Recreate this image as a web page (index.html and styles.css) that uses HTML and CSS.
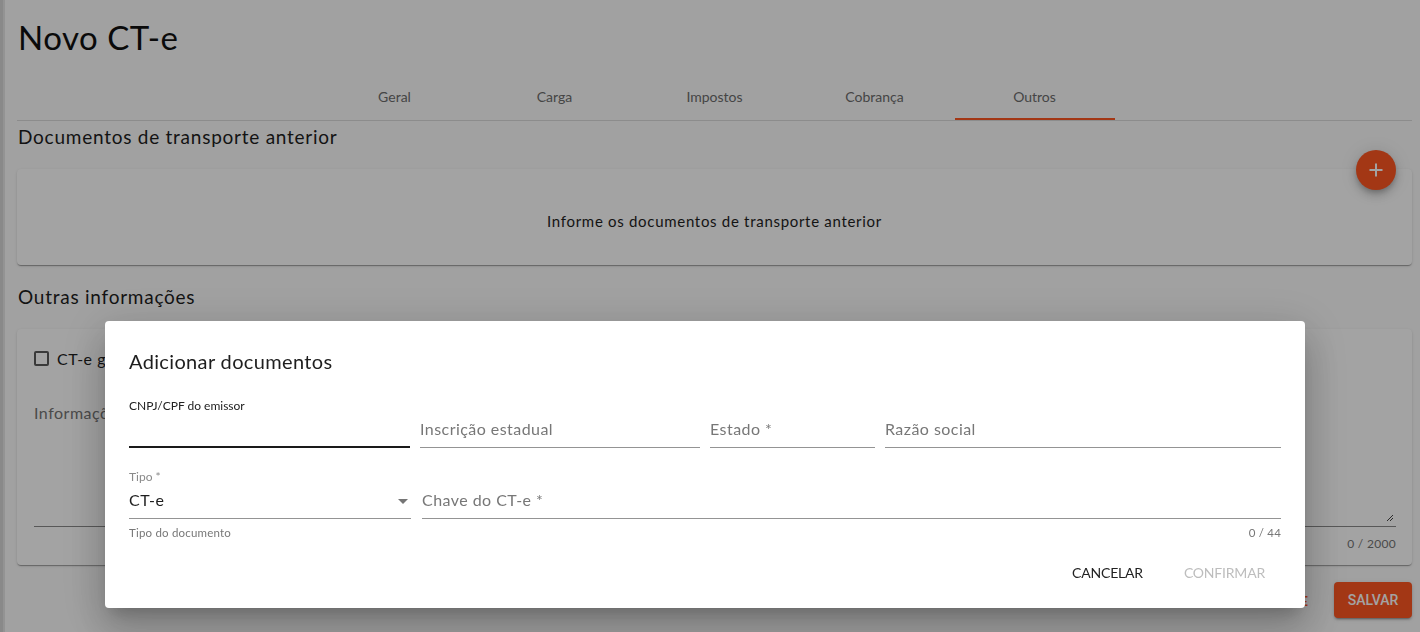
FILE: index.html
```html
<!DOCTYPE html>
<html lang="pt-BR">
<head>
<meta charset="utf-8">
<title>Novo CT-e</title>
<link rel="stylesheet" href="styles.css">
</head>
<body>
<div class="app">
  <div class="sidebar-edge"></div>
  <main class="main">
    <h1 class="page-title">Novo CT-e</h1>
    <nav class="tabs">
      <div class="tab">Geral</div>
      <div class="tab">Carga</div>
      <div class="tab">Impostos</div>
      <div class="tab">Cobrança</div>
      <div class="tab active">Outros</div>
    </nav>

    <h2 class="section-title">Documentos de transporte anterior</h2>
    <section class="card card-docs">
      <p class="empty-msg">Informe os documentos de transporte anterior</p>
      <button class="fab" aria-label="Adicionar">
        <svg width="16" height="16" viewBox="0 0 16 16"><path d="M8 1.5v13M1.5 8h13" stroke="#fff" stroke-width="2"/></svg>
      </button>
    </section>

    <h2 class="section-title">Outras informações</h2>
    <section class="card card-other">
      <label class="check-row">
        <span class="checkbox"></span>
        <span class="check-label">CT-e globalizado</span>
      </label>
      <div class="textarea-field">
        <div class="textarea-box">
          <span class="textarea-placeholder">Informações adicionais</span>
          <svg class="resize" width="8" height="8" viewBox="0 0 8 8"><path d="M1 7L7 1M4 7L7 4" stroke="#444" stroke-width="1"/></svg>
        </div>
        <div class="counter">0 / 2000</div>
      </div>
    </section>

    <div class="page-actions">
      <button class="btn-text-orange">VISUALIZAR DACTE</button>
      <button class="btn-primary">SALVAR</button>
    </div>
  </main>
</div>

<div class="backdrop"></div>

<div class="modal">
  <div class="dialog" role="dialog">
    <h3 class="dialog-title">Adicionar documentos</h3>
    <div class="row row-1">
      <div class="field f-cnpj focused">
        <span class="float-label">CNPJ/CPF do emissor</span>
        <div class="input"></div>
      </div>
      <div class="field f-ie">
        <div class="input"><span class="placeholder">Inscrição estadual</span></div>
      </div>
      <div class="field f-uf">
        <div class="input"><span class="placeholder">Estado *</span></div>
      </div>
      <div class="field f-razao">
        <div class="input"><span class="placeholder">Razão social</span></div>
      </div>
    </div>
    <div class="row row-2">
      <div class="field f-tipo">
        <span class="float-label muted">Tipo *</span>
        <div class="input select"><span class="value">CT-e</span>
          <svg class="arrow" width="10" height="5" viewBox="0 0 10 5"><path d="M0 0h10L5 5z" fill="#757575"/></svg>
        </div>
        <span class="helper">Tipo do documento</span>
      </div>
      <div class="field f-chave">
        <div class="input"><span class="placeholder">Chave do CT-e *</span></div>
        <span class="helper right">0 / 44</span>
      </div>
    </div>
    <div class="dialog-actions">
      <button class="btn-text">CANCELAR</button>
      <button class="btn-text disabled">CONFIRMAR</button>
    </div>
  </div>
</div>
</body>
</html>
```

FILE: styles.css
```css
* { box-sizing: border-box; }
html, body { margin: 0; padding: 0; }
body {
  font-family: Lato, "Noto Sans", sans-serif;
  color: #1e1e1e;
  background: #fcfcfc;
  width: 1420px;
  height: 632px;
  overflow: hidden;
}
button { font-family: inherit; border: 0; background: none; cursor: pointer; padding: 0; }

.app { display: flex; min-height: 632px; }
.sidebar-edge {
  width: 5px;
  background: linear-gradient(to right, #d6d6d6 0, #d6d6d6 3px, #e6e6e6 3px);
  flex: none;
}
.main { flex: 1; padding: 0 8px 0 12px; }

.page-title {
  margin: 17px 0 0 1px;
  font-size: 33px;
  font-weight: 400;
  line-height: 40px;
  color: #111;
  letter-spacing: 0.5px;
}

.tabs {
  margin-top: 15px;
  height: 49px;
  display: flex;
  justify-content: center;
  border-bottom: 1px solid #dcdcdc;
}
.tab {
  width: 160px;
  height: 48px;
  display: flex;
  align-items: center;
  justify-content: center;
  font-size: 14px;
  color: #6d6d6d;
}
.tab.active { border-bottom: 2px solid #ff5722; height: 48px; padding-top: 2px; }

.section-title {
  margin: 4px 0 0 1px;
  font-size: 19px;
  font-weight: 400;
  line-height: 24px;
  color: #1e1e1e;
  letter-spacing: 0.75px;
}

.card {
  background: #fff;
  border-radius: 4px;
  box-shadow: 0 2px 1px -1px rgba(0,0,0,.2), 0 1px 1px 0 rgba(0,0,0,.14), 0 1px 3px 0 rgba(0,0,0,.12);
  margin-top: 20px;
  position: relative;
}
.card-docs {
  height: 96px;
  display: flex;
  align-items: center;
  justify-content: center;
  margin-bottom: 20px;
}
.empty-msg { margin: 8px 0 0; font-size: 15px; color: #1e1e1e; letter-spacing: 0.7px; }

.fab {
  position: absolute;
  top: -19px;
  right: 16px;
  width: 40px;
  height: 40px;
  border-radius: 50%;
  background: #ff5722;
  display: flex;
  align-items: center;
  justify-content: center;
  box-shadow: 0 3px 5px -1px rgba(0,0,0,.2), 0 6px 10px 0 rgba(0,0,0,.14), 0 1px 18px 0 rgba(0,0,0,.12);
}

.card-other { height: 236px; padding: 19px 16px 0 17px; }
.check-row { display: flex; align-items: center; gap: 8px; height: 20px; }
.checkbox {
  width: 15px; height: 15px;
  border: 2px solid #5a5a5a;
  border-radius: 2px;
}
.check-label { font-size: 16px; color: #1e1e1e; letter-spacing: 0.5px; }

.textarea-field { margin-top: 33px; }
.textarea-box {
  position: relative;
  height: 126px;
  border-bottom: 1px solid #8a8a8a;
}
.textarea-placeholder { font-size: 16px; color: #757575; line-height: 24px; display: block; letter-spacing: 0.5px; }
.resize { position: absolute; right: 2px; bottom: 4px; }
.counter { text-align: right; font-size: 12px; color: #757575; margin-top: 9px; letter-spacing: 0.3px; }

.page-actions {
  margin-top: 17px;
  display: flex;
  justify-content: flex-end;
  align-items: center;
  gap: 26px;
}
.btn-text-orange { font-size: 14px; font-weight: 700; color: #ff5722; }
.btn-primary {
  width: 78px;
  height: 36px;
  border-radius: 4px;
  background: #ff5722;
  color: #fff;
  font-family: Roboto, "Liberation Sans", sans-serif;
  font-weight: 500;
  font-size: 14px;
  box-shadow: 0 3px 1px -2px rgba(0,0,0,.2), 0 2px 2px 0 rgba(0,0,0,.14), 0 1px 5px 0 rgba(0,0,0,.12);
}

.backdrop {
  position: fixed;
  inset: 0;
  background: rgba(0,0,0,0.36);
}

.modal {
  position: fixed;
  inset: 0;
  display: flex;
  align-items: flex-start;
  padding: 321px 0 0 105px;
}
.dialog {
  width: 1200px;
  height: 287px;
  background: #fff;
  border-radius: 4px;
  padding: 26px 24px 0 24px;
  box-shadow: 0 11px 15px -7px rgba(0,0,0,.2), 0 24px 38px 3px rgba(0,0,0,.14), 0 9px 46px 8px rgba(0,0,0,.12);
}
.dialog-title {
  margin: 0;
  font-size: 20px;
  font-weight: 400;
  line-height: 28px;
  color: #1e1e1e;
  letter-spacing: 0.35px;
}

.row { display: flex; gap: 10px; }
.row-1 { margin-top: 23px; }
.row-2 { margin-top: 21px; gap: 11px; }

.field { display: flex; flex-direction: column; justify-content: flex-end; }
.f-cnpj { width: 281px; }
.f-ie { width: 280px; }
.f-uf { width: 165px; }
.f-razao { flex: 1; }
.f-tipo { width: 282px; }
.f-chave { flex: 1; }

.float-label { font-size: 12px; line-height: 16px; color: #222; }
.float-label.muted { color: #8a8a8a; }

.input {
  height: 34px;
  border-bottom: 1px solid #949494;
  display: flex;
  align-items: center;
  padding-bottom: 4px;
  font-size: 16px;
  position: relative;
  letter-spacing: 0.45px;
}
.focused .input { border-bottom: 2px solid #1a1a1a; }
.placeholder { color: #777; }
.value { color: #1e1e1e; }
.select .arrow { position: absolute; right: 3px; top: 14px; }

.helper { font-size: 11.5px; color: #777; line-height: 14px; margin-top: 7px; letter-spacing: 0.2px; }
.helper.right { text-align: right; }
.f-tipo .helper { height: 14px; }

.dialog-actions {
  display: flex;
  justify-content: flex-end;
  gap: 25px;
  margin-top: 14px;
  padding-right: 8px;
}
.btn-text {
  height: 36px;
  min-width: 64px;
  padding: 0 8px;
  font-size: 14px;
  color: #222;
  letter-spacing: -0.2px;
}
.btn-text.disabled { color: #bdbdbd; }
```
